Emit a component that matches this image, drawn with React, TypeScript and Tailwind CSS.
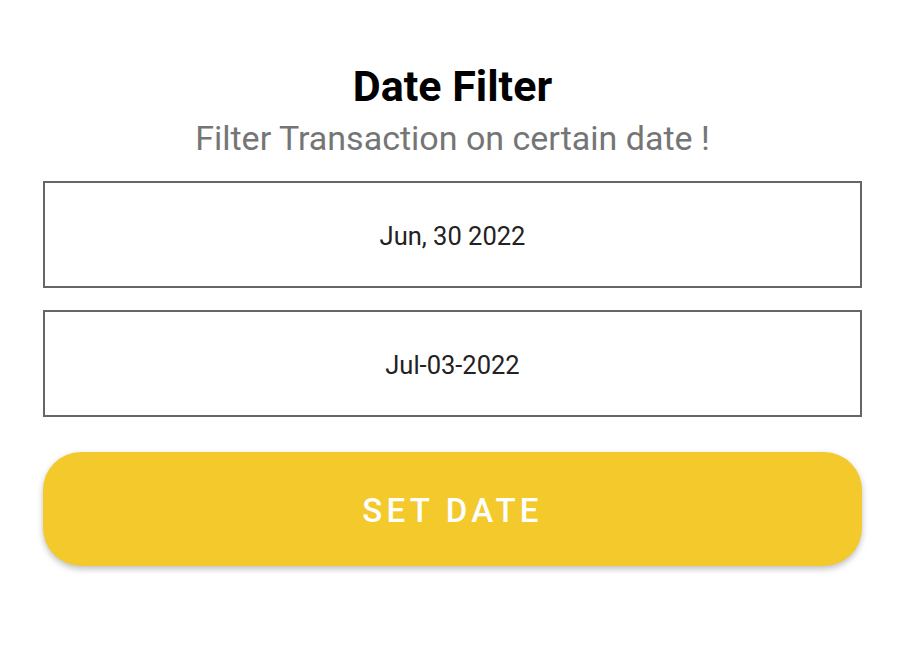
export default function App() {
  return (
    <div className="min-h-[666px] w-full bg-white font-['Roboto',sans-serif]">
      <div className="flex flex-col px-[43px] pt-[62px]">
        <h1 className="text-center text-[43px] font-bold leading-[48px] text-black">
          Date Filter
        </h1>
        <p className="mt-[8px] text-center text-[34px] leading-[40px] text-[#757575]">
          Filter Transaction on certain date !
        </p>

        <div className="mt-[23px] flex h-[107px] items-center justify-center border-2 border-[#666666] pt-[4px] text-[25.5px] text-[#222222]">
          Jun, 30 2022
        </div>
        <div className="mt-[22px] flex h-[107px] items-center justify-center border-2 border-[#666666] pt-[4px] text-[25.5px] text-[#222222]">
          Jul-03-2022
        </div>

        <button className="mt-[35px] h-[114px] rounded-[38px] bg-[#F3C92C] pt-[4px] text-[33px] font-medium tracking-[0.13em] text-white shadow-[0_3px_6px_rgba(0,0,0,0.25)]">
          SET DATE
        </button>
      </div>
    </div>
  );
}
